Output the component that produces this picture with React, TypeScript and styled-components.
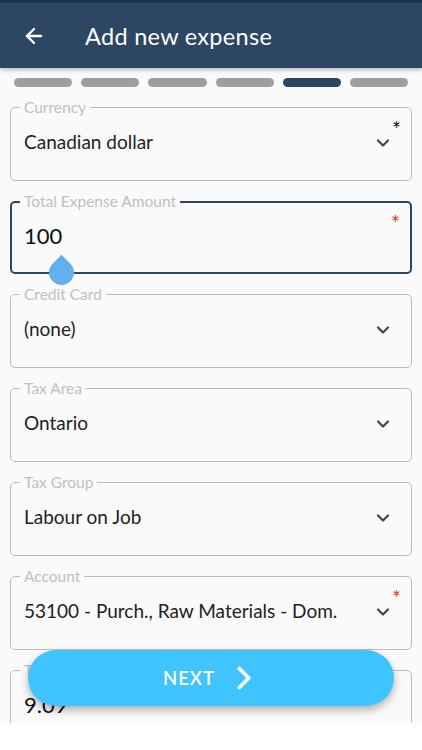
import React from "react";
import styled, { createGlobalStyle } from "styled-components";
import { ArrowLeft, ChevronDown, ChevronRight } from "lucide-react";

const GlobalStyle = createGlobalStyle`
  html, body {
    margin: 0;
    padding: 0;
    background: #ffffff;
    font-family: "Lato", "Open Sans", sans-serif;
  }
`;

const Screen = styled.div`
  position: relative;
  width: 422px;
  height: 750px;
  display: flex;
  flex-direction: column;
  background: #ffffff;
`;

const Header = styled.header`
  height: 65px;
  border-top: 3px solid #1f3450;
  background: #2d4664;
  display: flex;
  align-items: center;
  padding: 0 0 0 22px;
  box-shadow: 0 2px 4px rgba(0, 0, 0, 0.25);
  z-index: 2;
  color: #ffffff;
`;

const BackButton = styled.button`
  border: none;
  background: none;
  padding: 0;
  display: flex;
  color: #ffffff;
  margin-right: 39px;
`;

const Title = styled.h1`
  margin: 0 0 -1px;
  font-size: 23.5px;
  font-weight: 400;
  letter-spacing: 0.3px;
`;

const Body = styled.main`
  height: 655px;
  overflow: hidden;
  background: #fafafa;
  display: flex;
  flex-direction: column;
`;

const Steps = styled.div`
  display: flex;
  gap: 9px;
  padding: 10px 14px 0;
  margin-bottom: 12px;
`;

const Step = styled.div<{ $active?: boolean }>`
  flex: 1;
  height: 9px;
  border-radius: 5px;
  background: ${(p) => (p.$active ? "#2d4664" : "#9e9e9e")};
`;

const Fields = styled.div`
  display: flex;
  flex-direction: column;
  gap: 12px;
  padding: 0 10px 0 10px;
`;

const Field = styled.fieldset<{ $focused?: boolean }>`
  position: relative;
  margin: 0;
  padding: 0;
  min-width: 0;
  border: ${(p) => (p.$focused ? "2px solid #2d4664" : "1px solid #bdbdbd")};
  border-radius: 5px;
`;

const Legend = styled.legend<{ $focused?: boolean }>`
  margin-left: ${(p) => (p.$focused ? "8px" : "9px")};
  padding: 0 4px;
  font-size: 15.5px;
  line-height: 17px;
  color: #c0c0c0;
`;

const Row = styled.div<{ $focused?: boolean }>`
  height: ${(p) => (p.$focused ? "62px" : "64px")};
  box-sizing: border-box;
  display: flex;
  align-items: flex-start;
  padding: ${(p) => (p.$focused ? "13px 17px 0 12px" : "13px 18px 0 13px")};
`;

const Value = styled.div<{ $strong?: boolean }>`
  flex: 1;
  font-size: ${(p) => (p.$strong ? "22px" : "19px")};
  font-weight: 400;
  line-height: 26px;
  color: ${(p) => (p.$strong ? "#111111" : "#222222")};
  white-space: nowrap;
`;

const Caret = styled.span`
  display: flex;
  color: #444444;
  margin-top: 4px;
`;

const Required = styled.span<{ $red?: boolean }>`
  position: absolute;
  top: 3px;
  right: 10px;
  font-size: 21px;
  line-height: 20px;
  color: ${(p) => (p.$red ? "#e53935" : "#111111")};
`;

const CursorHandle = styled.span`
  position: absolute;
  left: 37px;
  top: 50px;
  width: 25px;
  height: 25px;
  background: #64b0ee;
  border-radius: 0 50% 50% 50%;
  transform: rotate(45deg);
`;

const NextButton = styled.button`
  position: absolute;
  left: 28px;
  top: 650px;
  width: 366px;
  height: 56px;
  border: none;
  border-radius: 28px;
  background: #40c4ff;
  color: #ffffff;
  display: flex;
  align-items: center;
  justify-content: center;
  gap: 10px;
  font-family: "Lato", "Open Sans", sans-serif;
  font-size: 18.5px;
  font-weight: 600;
  letter-spacing: 1px;
  box-shadow: 0 4px 8px rgba(0, 0, 0, 0.3);
  padding: 0 0 0 4px;
`;

type FieldData = {
  label: string;
  value: string;
  select?: boolean;
  required?: "black" | "red";
  focused?: boolean;
};

const fields: FieldData[] = [
  { label: "Currency", value: "Canadian dollar", select: true, required: "black" },
  { label: "Total Expense Amount", value: "100", required: "red", focused: true },
  { label: "Credit Card", value: "(none)", select: true },
  { label: "Tax Area", value: "Ontario", select: true },
  { label: "Tax Group", value: "Labour on Job", select: true },
  {
    label: "Account",
    value: "53100 - Purch., Raw Materials - Dom.",
    select: true,
    required: "red",
  },
  { label: "Tax Amount", value: "9.09" },
];

export default function App() {
  return (
    <Screen>
      <GlobalStyle />
      <Header>
        <BackButton aria-label="Back">
          <ArrowLeft size={24} strokeWidth={2.4} />
        </BackButton>
        <Title>Add new expense</Title>
      </Header>
      <Body>
        <Steps>
          {[0, 1, 2, 3, 4, 5].map((i) => (
            <Step key={i} $active={i === 4} />
          ))}
        </Steps>
        <Fields>
          {fields.map((f) => (
            <Field key={f.label} $focused={f.focused}>
              <Legend $focused={f.focused}>{f.label}</Legend>
              {f.required && <Required $red={f.required === "red"}>*</Required>}
              <Row $focused={f.focused}>
                <Value $strong={f.focused || f.label === "Tax Amount"}>{f.value}</Value>
                {f.select && (
                  <Caret>
                    <ChevronDown size={20} strokeWidth={2.6} />
                  </Caret>
                )}
              </Row>
              {f.focused && <CursorHandle />}
            </Field>
          ))}
        </Fields>
      </Body>
      <NextButton>
        NEXT
        <ChevronRight size={38} strokeWidth={2.4} />
      </NextButton>
    </Screen>
  );
}
